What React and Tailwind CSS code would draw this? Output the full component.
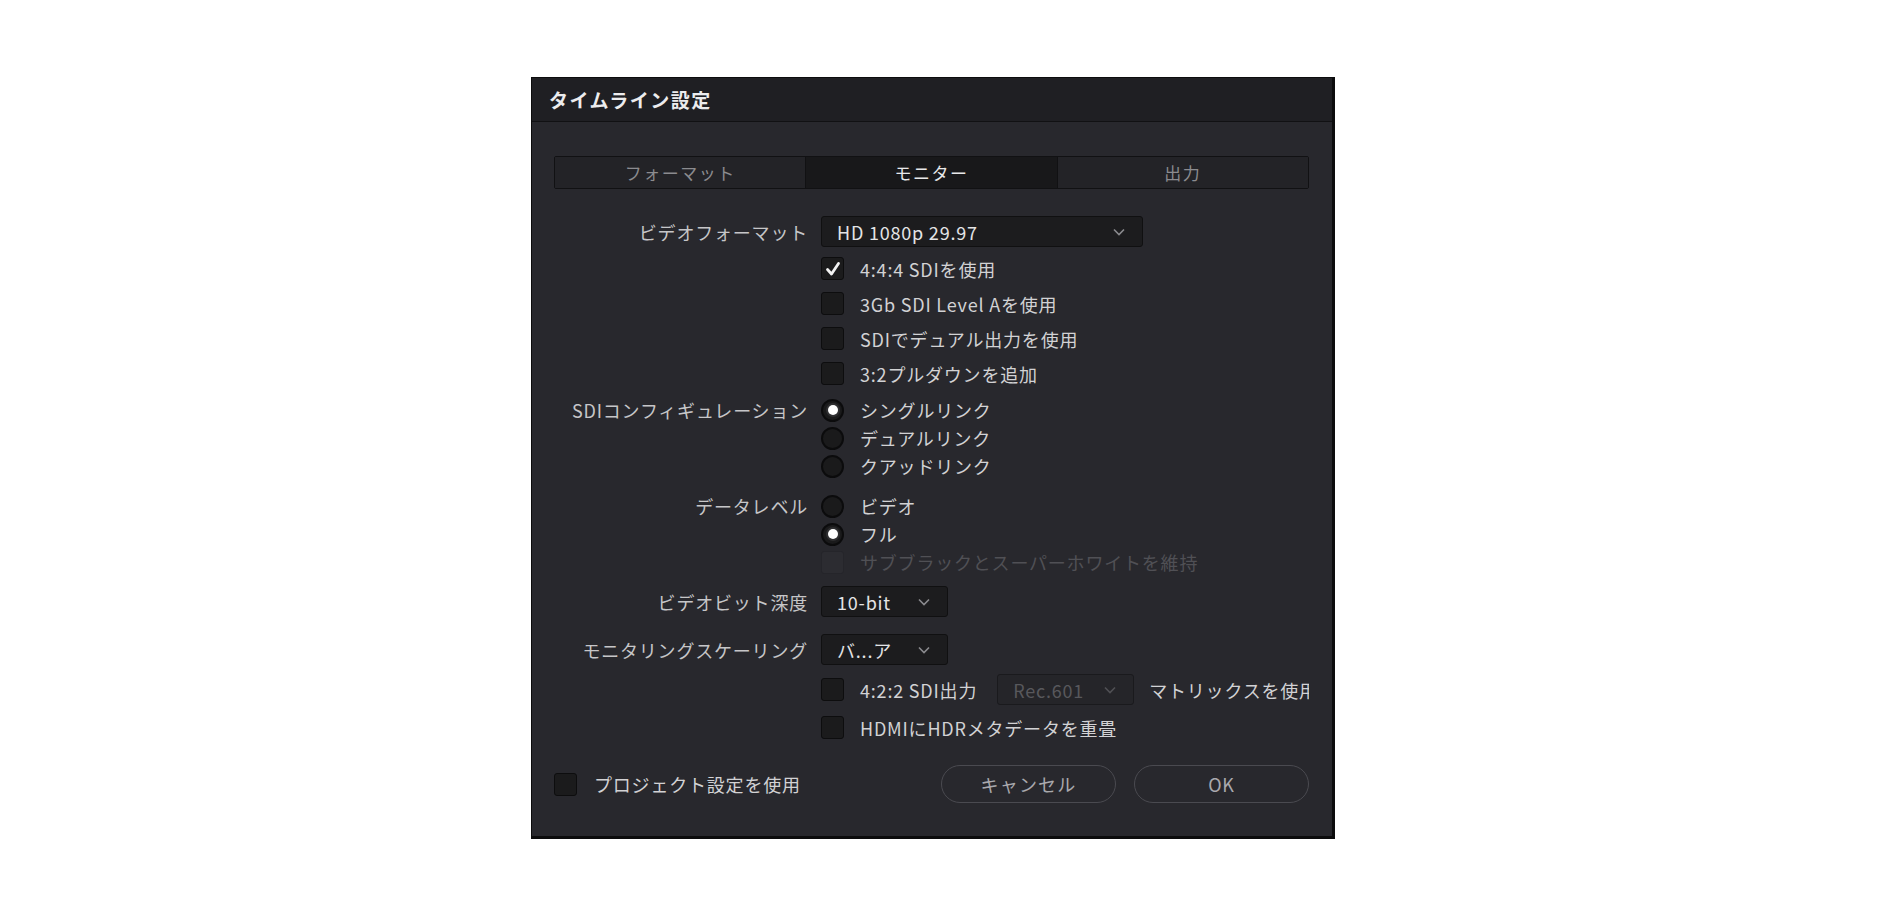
import React, { useState } from "react";

const FONT = "font-['Noto_Sans_CJK_JP','Noto_Sans',sans-serif]";

function Chevron({ className = "" }) {
  return (
    <svg width="12" height="8" viewBox="0 0 12 8" className={className}>
      <path d="M1 1.5 L6 6.5 L11 1.5" fill="none" stroke="currentColor" strokeWidth="1.6" />
    </svg>
  );
}

function Checkbox({ checked, disabled }) {
  if (disabled) {
    return <div className="w-[23px] h-[23px] shrink-0 rounded-[3px] bg-[#2c2c31] border border-[#25252a]" />;
  }
  return (
    <div className="w-[23px] h-[23px] shrink-0 rounded-[3px] bg-[#1b1b1c] border border-[#0d0d0e] flex items-center justify-center">
      {checked && (
        <svg width="16" height="16" viewBox="0 0 16 16">
          <path d="M2.5 8.5 L6.5 13 L13.5 2.5" fill="none" stroke="#f2f2f2" strokeWidth="2.8" strokeLinecap="round" strokeLinejoin="round" />
        </svg>
      )}
    </div>
  );
}

function Radio({ selected }) {
  return (
    <div className="w-[23px] h-[23px] shrink-0 rounded-full bg-[#1a1a1b] border-2 border-[#0b0b0c] flex items-center justify-center">
      {selected && <div className="w-[10px] h-[10px] rounded-full bg-white ring-2 ring-[#2e2e30]" />}
    </div>
  );
}

function Row({ label, height = "h-[35px]", children, className = "" }) {
  return (
    <div className={`flex items-center ${height} ${className}`}>
      <div className="w-[254px] shrink-0 text-right text-[#c6c6c8] whitespace-nowrap">{label}</div>
      <div className="ml-[13px] flex items-center min-w-0 flex-1 overflow-hidden">{children}</div>
    </div>
  );
}

function Option({ children, muted }) {
  return (
    <span className={`ml-[16px] whitespace-nowrap ${muted ? "text-[#505055]" : "text-[#d2d2d4]"}`}>{children}</span>
  );
}

function Select({ value, width, muted }) {
  return (
    <div
      className={`${width} h-[31px] shrink-0 rounded-[3px] border flex items-center justify-between pl-[15px] pr-[17px] ${
        muted ? "bg-[#252529] border-[#1a1a1d]" : "bg-[#1c1c1e] border-[#101011]"
      }`}
    >
      <span className={`text-[18px] ${muted ? "text-[#58585c]" : "text-[#e4e4e6]"}`}>{value}</span>
      <Chevron className={muted ? "text-[#505054]" : "text-[#8a8a8e]"} />
    </div>
  );
}

export default function App() {
  const [tab, setTab] = useState("monitor");
  const tabs = [
    { id: "format", label: "フォーマット" },
    { id: "monitor", label: "モニター" },
    { id: "output", label: "出力" },
  ];

  return (
    <div className={`min-h-screen bg-white pt-[77px] pl-[531px] ${FONT}`}>
      <div className="w-[804px] bg-[#28282d] border border-[#0c0c0d] border-r-[3px] border-b-[3px] text-[18px] leading-none tracking-[0.8px]">
        <div className="h-[44px] bg-[#1f1f23] border-b border-[#111113] flex items-center px-[17px]">
          <span className="text-[19px] font-bold text-[#ececee] tracking-[1.5px]">タイムライン設定</span>
        </div>

        <div className="pl-[22px] pr-[23px] pb-[33px]">
          <div className="mt-[34px] h-[33px] flex border border-[#111113] rounded-[2px] overflow-hidden">
            {tabs.map((t, i) => (
              <button
                key={t.id}
                onClick={() => setTab(t.id)}
                className={`flex-1 flex items-center justify-center text-[17px] tracking-[1.5px] ${i > 0 ? "border-l border-[#111113]" : ""} ${
                  tab === t.id ? "bg-[#18181a] text-[#e8e8ea]" : "bg-[#232327] text-[#8b8b8f]"
                }`}
              >
                {t.label}
              </button>
            ))}
          </div>

          <Row label="ビデオフォーマット" height="h-[31px]" className="mt-[27px]">
            <Select value="HD 1080p 29.97" width="w-[322px]" />
          </Row>

          <div className="mt-[4px]">
            <Row label="">
              <Checkbox checked />
              <Option>4:4:4 SDIを使用</Option>
            </Row>
            <Row label="">
              <Checkbox />
              <Option>3Gb SDI Level Aを使用</Option>
            </Row>
            <Row label="">
              <Checkbox />
              <Option>SDIでデュアル出力を使用</Option>
            </Row>
            <Row label="">
              <Checkbox />
              <Option>3:2プルダウンを追加</Option>
            </Row>
          </div>

          <div className="mt-[5px]">
            <Row label="SDIコンフィギュレーション" height="h-[28px]">
              <Radio selected />
              <Option>シングルリンク</Option>
            </Row>
            <Row label="" height="h-[28px]">
              <Radio />
              <Option>デュアルリンク</Option>
            </Row>
            <Row label="" height="h-[28px]">
              <Radio />
              <Option>クアッドリンク</Option>
            </Row>
          </div>

          <div className="mt-[12px]">
            <Row label="データレベル" height="h-[28px]">
              <Radio />
              <Option>ビデオ</Option>
            </Row>
            <Row label="" height="h-[28px]">
              <Radio selected />
              <Option>フル</Option>
            </Row>
            <Row label="" height="h-[28px]">
              <Checkbox disabled />
              <Option muted>サブブラックとスーパーホワイトを維持</Option>
            </Row>
          </div>

          <Row label="ビデオビット深度" height="h-[31px]" className="mt-[10px]">
            <Select value="10-bit" width="w-[127px]" />
          </Row>

          <Row label="モニタリングスケーリング" height="h-[31px]" className="mt-[17px]">
            <Select value="バ...ア" width="w-[127px]" />
          </Row>

          <Row label="" height="h-[31px]" className="mt-[9px]">
            <Checkbox />
            <Option>4:2:2 SDI出力</Option>
            <div className="ml-[20px]">
              <Select value="Rec.601" width="w-[137px]" muted />
            </div>
            <span className="ml-[15px] whitespace-nowrap text-[#d2d2d4]">マトリックスを使用</span>
          </Row>

          <Row label="" height="h-[31px]" className="mt-[7px]">
            <Checkbox />
            <Option>HDMIにHDRメタデータを重畳</Option>
          </Row>

          <div className="mt-[22px] flex items-center h-[38px]">
            <Checkbox />
            <span className="ml-[17px] text-[#d2d2d4] whitespace-nowrap">プロジェクト設定を使用</span>
            <div className="ml-auto flex gap-[18px]">
              <button className="w-[175px] h-[38px] rounded-full border border-[#4a4a50] text-[#a9a9ad] text-[18px] tracking-[1.2px]">
                キャンセル
              </button>
              <button className="w-[175px] h-[38px] rounded-full border border-[#4a4a50] text-[#a9a9ad] text-[18px]">
                OK
              </button>
            </div>
          </div>
        </div>
      </div>
    </div>
  );
}
